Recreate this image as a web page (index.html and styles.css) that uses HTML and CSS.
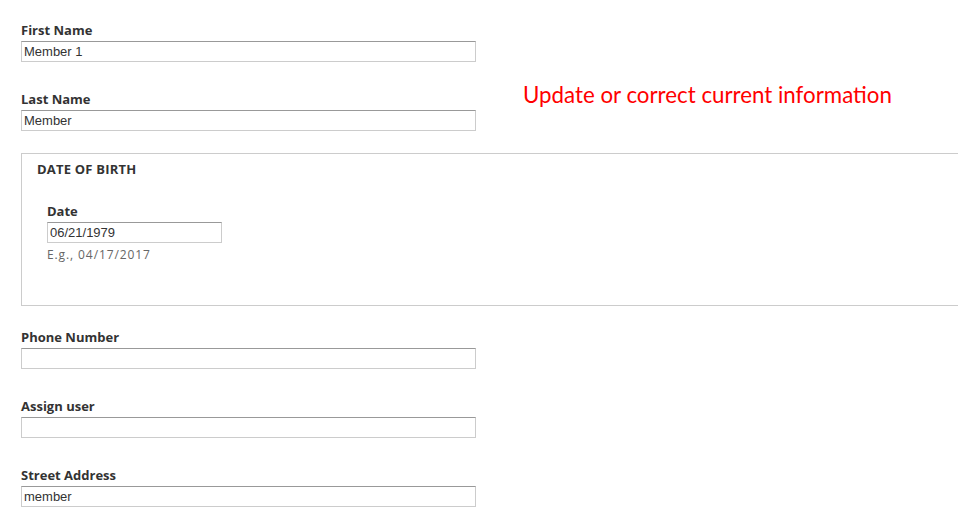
FILE: index.html
```html
<!DOCTYPE html>
<html>
<head>
<meta charset="utf-8">
<link rel="stylesheet" href="styles.css">
</head>
<body>
<div class="page">
  <form class="form">
    <div class="form-item">
      <label class="label">First Name</label>
      <input class="text-input" type="text" value="Member 1">
    </div>
    <div class="form-item">
      <label class="label">Last Name</label>
      <input class="text-input" type="text" value="Member">
    </div>
    <div class="fieldset">
      <div class="legend">DATE OF BIRTH</div>
      <div class="fieldset-body">
        <label class="label">Date</label>
        <input class="text-input date-input" type="text" value="06/21/1979">
        <div class="description">E.g., 04/17/2017</div>
      </div>
    </div>
    <div class="form-item">
      <label class="label">Phone Number</label>
      <input class="text-input" type="text" value="">
    </div>
    <div class="form-item">
      <label class="label">Assign user</label>
      <input class="text-input" type="text" value="">
    </div>
    <div class="form-item last">
      <label class="label">Street Address</label>
      <input class="text-input" type="text" value="member">
    </div>
  </form>
  <div class="note">Update or correct current information</div>
</div>
</body>
</html>
```
FILE: styles.css
```css
html, body {
  margin: 0;
  padding: 0;
  background: #fff;
  overflow: hidden;
}
.page {
  position: relative;
  width: 958px;
  height: 508px;
  padding: 21px 0 0 21px;
  box-sizing: border-box;
  font-family: "Open Sans", "DejaVu Sans", sans-serif;
  color: #333;
  overflow: hidden;
}
.form {
  display: flex;
  flex-direction: column;
}
.form-item {
  display: flex;
  flex-direction: column;
  align-items: flex-start;
  margin-bottom: 28px;
}
.form-item.last {
  margin-bottom: 0;
}
.label {
  display: block;
  font-weight: 700;
  font-size: 13px;
  line-height: 18px;
  height: 18px;
  margin-bottom: 2px;
  color: #333;
}
.text-input {
  box-sizing: border-box;
  width: 455px;
  height: 21px;
  margin: 0;
  padding: 0 2px;
  border: 1px solid #ccc;
  border-top-color: #999;
  border-radius: 0;
  font-family: "Liberation Sans", Arial, sans-serif;
  font-size: 13px;
  color: #333;
  outline: none;
  background: #fff;
}
.fieldset {
  border: 1px solid #ccc;
  border-right: none;
  margin: -6px 0 22px 0;
  height: 153px;
  box-sizing: border-box;
  padding: 6px 0 0 15px;
}
.legend {
  font-weight: 700;
  font-size: 13px;
  line-height: 18px;
  color: #333;
  text-transform: uppercase;
  letter-spacing: 0.2px;
}
.fieldset-body {
  display: flex;
  flex-direction: column;
  align-items: flex-start;
  padding: 24px 0 0 10px;
}
.date-input {
  width: 175px;
}
.description {
  font-size: 12px;
  line-height: 16px;
  margin-top: 4px;
  color: #666;
  letter-spacing: 0.9px;
}
.note {
  position: absolute;
  left: 523px;
  top: 81px;
  font-family: Lato, "Open Sans", sans-serif;
  font-size: 22.3px;
  line-height: 28px;
  color: #f00;
}
```
